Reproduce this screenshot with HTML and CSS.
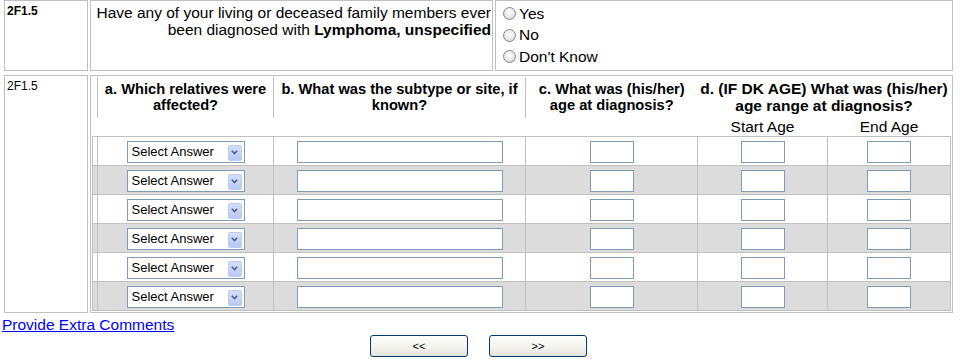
FILE: index.html
```html
<!DOCTYPE html>
<html lang="en">
<head>
  <meta charset="UTF-8">
  <title>Family History - Lymphoma</title>
  <link rel="stylesheet" href="styles.css">
</head>
<body>
<div class="page">

  <table class="question">
    <colgroup><col class="col-num"><col class="col-text"><col class="col-ans"></colgroup>
    <tr class="ask-row">
      <td class="box qnum"><strong>2F1.5</strong></td>
      <td class="box qtext">Have any of your living or deceased family members ever<br>been diagnosed with <strong>Lymphoma, unspecified</strong></td>
      <td class="box qanswer">
        <label class="opt"><input type="radio" name="q2f15">Yes</label>
        <label class="opt"><input type="radio" name="q2f15">No</label>
        <label class="opt"><input type="radio" name="q2f15">Don't Know</label>
      </td>
    </tr>
  </table>

  <table class="question">
    <colgroup><col class="col-num"><col class="col-text"><col class="col-ans"></colgroup>
    <tr>
      <td class="box qnum">2F1.5</td>
      <td class="box qgrid" colspan="2">
        <table class="grid">
          <colgroup>
            <col class="g-pad"><col class="g-a"><col class="g-b"><col class="g-c"><col class="g-start"><col class="g-end">
          </colgroup>
          <thead>
            <tr class="head-main">
              <th></th>
              <th class="ruled">a. Which relatives were<br>affected?</th>
              <th class="ruled">b. What was the subtype or site, if<br>known?</th>
              <th class="ruled">c. What was (his/her)<br>age at diagnosis?</th>
              <th class="wide" colspan="2">d. (IF DK AGE) What was (his/her)<br>age range at diagnosis?</th>
            </tr>
            <tr class="head-sub">
              <th></th><th></th><th></th><th></th>
              <th>Start Age</th>
              <th>End Age</th>
            </tr>
          </thead>
          <tbody id="relatives"></tbody>
        </table>
      </td>
    </tr>
  </table>

  <div class="extra"><a href="#">Provide Extra Comments</a></div>

  <div class="nav">
    <button type="button">&lt;&lt;</button>
    <button type="button">&gt;&gt;</button>
  </div>

</div>

<script>
  const rows = 6;
  const body = document.getElementById('relatives');

  for (let i = 0; i < rows; i++) {
    const tr = document.createElement('tr');
    tr.innerHTML = `
      <td></td>
      <td>
        <span class="pick">
          <select><option>Select Answer</option></select>
          <span class="drop"><svg width="7" height="5" viewBox="0 0 7 5"><polyline points="0.8,0.8 3.5,3.6 6.2,0.8" fill="none" stroke="#4d5f80" stroke-width="1.6"/></svg></span>
        </span>
      </td>
      <td><input type="text" class="field field-long"></td>
      <td><input type="text" class="field field-short"></td>
      <td><input type="text" class="field field-short"></td>
      <td><input type="text" class="field field-short"></td>`;
    body.appendChild(tr);
  }
</script>

</body>
</html>
```

FILE: styles.css
```css
body {
  margin: 0;
  font-family: "Liberation Sans", Arial, sans-serif;
  font-size: 15.5px;
  color: #000;
  background: #fff;
}

.page {
  width: 953px;
  margin: -2px 0 0 2px;
}

.question {
  width: 953px;
  table-layout: fixed;
  border-spacing: 2px;
}

.col-num { width: 84px; }
.col-text { width: 403px; }
.col-ans { width: 458px; }

.box {
  border: 1px solid #c0c0c0;
  padding: 3px 2px;
  vertical-align: top;
  box-sizing: border-box;
}

.ask-row .box {
  height: 70px;
}

.qnum {
  font-size: 12px;
}

.qtext {
  text-align: right;
  line-height: 17px;
}

.question .qtext {
  padding-right: 1px;
}

.question .qanswer {
  padding: 2px;
}

.opt {
  display: flex;
  align-items: center;
  gap: 3px;
  height: 21.5px;
}

.opt input {
  appearance: none;
  width: 13px;
  height: 13px;
  margin: 0 0 0 5px;
  border: 1px solid #7d8a99;
  border-radius: 50%;
  background: radial-gradient(circle at 50% 40%, #fdfdfd 0, #ebebeb 50%, #c8c8c8 100%);
  box-sizing: border-box;
}

.question .qgrid {
  padding: 1px;
}

/* inner relatives grid */
.grid {
  width: 859px;
  table-layout: fixed;
  border-collapse: collapse;
}

.g-pad { width: 5px; }
.g-a { width: 176px; }
.g-b { width: 252px; }
.g-c { width: 172px; }
.g-start { width: 130px; }
.g-end { width: 123px; }

.grid th {
  padding: 0;
  font-size: 14.67px;
  line-height: 16px;
  text-align: center;
  vertical-align: middle;
  white-space: nowrap;
}

.head-main th {
  height: 41px;
}

.grid .ruled {
  border-left: 1px solid #c0c0c0;
}

.grid .wide {
  font-size: 15.5px;
  line-height: 17px;
}

.head-sub th {
  height: 18px;
  font-size: 15.5px;
  font-weight: normal;
  line-height: 18px;
}

.grid tbody tr {
  height: 29px;
}

.grid td {
  border: 1px solid #c0c0c0;
  padding: 4px 0 0;
  text-align: center;
  vertical-align: top;
}

.grid tbody tr:nth-child(even) td {
  background: #dcdcdc;
}

.pick {
  position: relative;
  display: inline-block;
  vertical-align: top;
}

.pick select {
  appearance: none;
  display: block;
  width: 118px;
  height: 22px;
  border: 1px solid #7f9db9;
  border-radius: 0;
  background: #fff;
  padding: 0 0 0 4px;
  font-family: inherit;
  font-size: 13px;
  color: #000;
}

.drop {
  position: absolute;
  top: 4px;
  right: 3px;
  width: 14px;
  height: 16px;
  display: flex;
  align-items: center;
  justify-content: center;
  border: 1px solid #bccbef;
  border-radius: 2px;
  background: linear-gradient(#d2defc, #b7c9f5);
  box-sizing: border-box;
  pointer-events: none;
}

.field {
  height: 22px;
  border: 1px solid #7f9db9;
  padding: 0 2px;
  margin: 0;
  box-sizing: border-box;
  vertical-align: top;
  font-family: inherit;
  font-size: 13px;
}

.field-long { width: 206px; }
.field-short { width: 44px; }

.extra {
  margin-top: 1px;
  line-height: 18px;
}

.extra a {
  color: #0000ff;
}

.nav {
  display: flex;
  justify-content: center;
  gap: 21px;
  margin-top: 1px;
}

.nav button {
  width: 98px;
  height: 22px;
  padding: 0;
  border: 1px solid #003c74;
  border-radius: 3px;
  background: linear-gradient(#fefefd, #f3f2ec 60%, #e3e2da);
  font-family: inherit;
  font-size: 11px;
  color: #000;
}
```
